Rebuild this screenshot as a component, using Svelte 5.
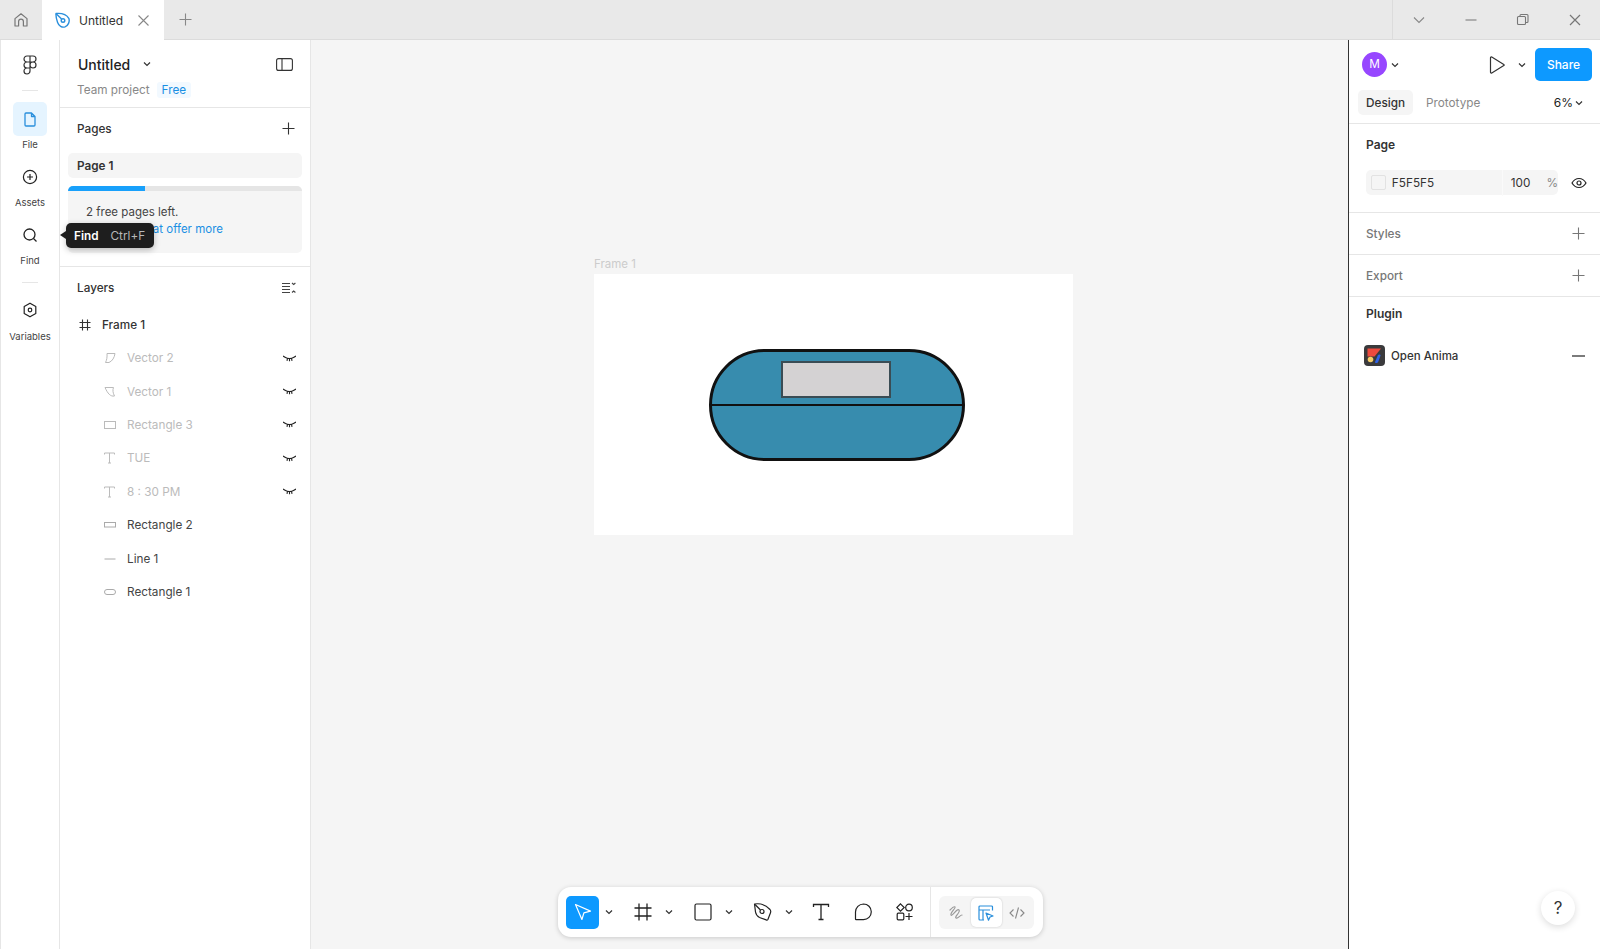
<script>
  const layers = [
    { name: "Vector 2", icon: "vec2", hidden: true },
    { name: "Vector 1", icon: "vec1", hidden: true },
    { name: "Rectangle 3", icon: "rect", hidden: true },
    { name: "TUE", icon: "text", hidden: true },
    { name: "8 : 30 PM", icon: "text", hidden: true },
    { name: "Rectangle 2", icon: "slim", hidden: false },
    { name: "Line 1", icon: "line", hidden: false },
    { name: "Rectangle 1", icon: "pill", hidden: false },
  ];
</script>

{#snippet chevron()}
  <svg class="chev" width="8" height="6" viewBox="0 0 8 6"><path d="M1 1.500l3 3 3-3" fill="none" stroke="#333" stroke-width="1.200"/></svg>
{/snippet}

{#snippet plus(color = "#333")}
  <svg width="13" height="13" viewBox="0 0 13 13"><path d="M6.500 0.500v12M0.500 6.500h12" fill="none" stroke={color} stroke-width="1.100"/></svg>
{/snippet}

<div class="window">
  <header class="tabbar">
    <div class="home">
      <svg width="16" height="16" viewBox="0 0 16 16" fill="none" stroke="#777" stroke-width="1.200"><path d="M2 6.600L8 1.800l6 4.800V14h-3.600V9.600a2.400 2.400 0 0 0-4.800 0V14H2z" stroke-linejoin="round"/></svg>
    </div>
    <div class="tab">
      <svg width="17" height="17" viewBox="0 0 17 17" fill="none" stroke="#2a8fdc" stroke-width="1.400"><path d="M2 1.500c4.800-.4 10.500 1 12.800 4.800 1.200 3.200-.6 7.500-3.800 8.600-3 .9-6.200-.9-7.400-4.300C2.600 8 1.800 4.500 2 1.500z" stroke-linejoin="round"/><circle cx="9" cy="8.500" r="1.800"/><path d="M2.200 1.700l5.400 5.400"/></svg>
      <span class="tab-name">Untitled</span>
      <svg width="13" height="13" viewBox="0 0 13 13"><path d="M1.500 1.500l10 10M11.500 1.500l-10 10" stroke="#888" stroke-width="1.100"/></svg>
    </div>
    <div class="newtab">{@render plus("#888")}</div>
    <div class="winctl">
      <svg width="14" height="14" viewBox="0 0 14 14"><path d="M2 4.500l5 5 5-5" fill="none" stroke="#888" stroke-width="1.100"/></svg>
      <svg width="14" height="14" viewBox="0 0 14 14"><path d="M1.500 7h11" stroke="#888" stroke-width="1.200"/></svg>
      <svg width="14" height="14" viewBox="0 0 14 14" fill="none" stroke="#777" stroke-width="1.100"><rect x="1.500" y="3.500" width="8" height="8" rx="1"/><path d="M4 3.500V2.500a1 1 0 0 1 1-1h6a1 1 0 0 1 1 1v6a1 1 0 0 1-1 1h-1.500"/></svg>
      <svg width="14" height="14" viewBox="0 0 14 14"><path d="M2 2l10 10M12 2L2 12" stroke="#777" stroke-width="1.200"/></svg>
    </div>
  </header>

  <div class="workspace">
    <nav class="rail">
      <div class="rail-logo">
        <svg width="14" height="20" viewBox="0 0 14 20" fill="none" stroke="#333" stroke-width="1.200"><path d="M7 1H4a3 3 0 0 0 0 6h3zM7 1h3a3 3 0 0 1 0 6H7zM7 7H4a3 3 0 0 0 0 6h3zM7 13H4a3 3 0 1 0 3 3zM10 7a3 3 0 1 1 0 6 3 3 0 0 1 0-6z"/></svg>
      </div>
      <div class="rail-sep"></div>
      <div class="rail-item">
        <div class="rail-icon active">
          <svg width="12" height="15" viewBox="0 0 12 15" fill="none" stroke="#2a8fdc" stroke-width="1.300"><path d="M1 2a1 1 0 0 1 1-1h5.500L11 4.500V13a1 1 0 0 1-1 1H2a1 1 0 0 1-1-1z M7.500 1v3.500H11" stroke-linejoin="round"/></svg>
        </div>
        <span>File</span>
      </div>
      <div class="rail-item">
        <div class="rail-icon">
          <svg width="16" height="16" viewBox="0 0 16 16" fill="none" stroke="#222" stroke-width="1.200"><circle cx="8" cy="8" r="6.600"/><path d="M8 5v6M5 8h6"/></svg>
        </div>
        <span>Assets</span>
      </div>
      <div class="rail-item short">
        <div class="rail-icon">
          <svg width="16" height="16" viewBox="0 0 16 16" fill="none" stroke="#222" stroke-width="1.300"><circle cx="7.500" cy="7.500" r="5.500"/><path d="M11.500 11.500L14.500 14.500"/></svg>
        </div>
        <span>Find</span>
      </div>
      <div class="rail-sep second"></div>
      <div class="rail-item vars">
        <div class="rail-icon">
          <svg width="16" height="16" viewBox="0 0 16 16" fill="none" stroke="#222" stroke-width="1.200"><path d="M8 1.200l5.800 3.300v7L8 14.800l-5.800-3.300v-7z" stroke-linejoin="round"/><circle cx="8" cy="8" r="1.800"/></svg>
        </div>
        <span>Variables</span>
      </div>
    </nav>

    <aside class="left">
      <section class="filehead">
        <div class="title-row">
          <strong>Untitled</strong>
          {@render chevron()}
          <svg class="toggle" width="17" height="13" viewBox="0 0 17 13" fill="none" stroke="#333" stroke-width="1.100"><rect x="0.600" y="0.600" width="15.800" height="11.800" rx="2"/><path d="M6 .6v11.800"/></svg>
        </div>
        <div class="sub-row"><span>Team project</span><span class="free">Free</span></div>
      </section>

      <section class="pages">
        <div class="section-head pages-head"><span>Pages</span>{@render plus()}</div>
        <div class="page-item">Page 1</div>
        <div class="upsell">
          <div class="progress"><div class="progress-fill" style="width: 33%"></div></div>
          <div class="upsell-body">
            <p>2 free pages left.</p>
            <p class="link">at offer more</p>
          </div>
        </div>
      </section>

      <section class="layers">
        <div class="section-head layers-head">
          <span>Layers</span>
          <svg width="14" height="12" viewBox="0 0 14 12" fill="none" stroke="#444" stroke-width="1.100"><path d="M0 1.500h8M0 4.500h8M0 7.500h8M0 10.500h8M10 1l1.700 1.500L13.400 1M10 10.500l1.700-1.500 1.700 1.500"/></svg>
        </div>
        <div class="frame-row">
          <svg width="12" height="12" viewBox="0 0 12 12" fill="none" stroke="#333" stroke-width="1.100"><path d="M3.500 0.500v11M8.500 0.500v11M0.500 3.500h11M0.500 8.500h11"/></svg>
          <span>Frame 1</span>
        </div>
        {#each layers as layer}
          <div class="layer" class:hidden={layer.hidden}>
            <span class="layer-icon">
              <svg width="12" height="12" viewBox="0 0 12 12" fill="none" stroke={layer.hidden ? "#bbb" : "#aaa"} stroke-width="1">
                {#if layer.icon === "vec2"}
                  <path d="M3 1.500h8c-.6 4-2.500 7.500-6 9H1.500c1.300-2.500 1.800-5.500 1.500-9z"/>
                {:else if layer.icon === "vec1"}
                  <path d="M1 1.500h8.500c-1 2.500-.6 5.500 1 8.500-4 .8-6.800-2.500-9.500-8.500z"/>
                {:else if layer.icon === "rect"}
                  <rect x="0.500" y="2.500" width="11" height="7"/>
                {:else if layer.icon === "text"}
                  <path d="M0.500 2.500V1h10v1.500M5.500 1v10M4 11h3"/>
                {:else if layer.icon === "slim"}
                  <rect x="0.500" y="3.500" width="11" height="4.500"/>
                {:else if layer.icon === "line"}
                  <path d="M0.500 6h11"/>
                {:else}
                  <rect x="0.500" y="3.500" width="11" height="5" rx="2.500"/>
                {/if}
              </svg>
            </span>
            <span class="layer-name">{layer.name}</span>
            {#if layer.hidden}
              <svg class="eye-off" width="13" height="7" viewBox="0 0 13 7" fill="none" stroke="#222" stroke-width="1.100"><path d="M2 2.200c2.800 1.600 6.200 1.600 9 0M0 1l2.500 1.500M13 1l-2.500 1.500M4.500 3.200L4 5.800M8.500 3.200L9 5.800M6.500 3.500V6.200"/></svg>
            {/if}
          </div>
        {/each}
      </section>

      <div class="tooltip"><b>Find</b><span>Ctrl+F</span></div>
    </aside>

    <main class="canvas">
      <div class="frame-label">Frame 1</div>
      <div class="frame">
        <div class="pill">
          <div class="divider"></div>
          <div class="screen"></div>
        </div>
      </div>

      <div class="toolbar">
        <div class="tools">
          <div class="tool move">
            <svg width="20" height="20" viewBox="0 0 20 20" fill="none" stroke="#fff" stroke-width="1.200"><path d="M2.500 2.500l15 6.600-6.600 1.800-2 6.600z" stroke-linejoin="round"/></svg>
          </div>
          <div class="caret">{@render chevron()}</div>
          <div class="tool">
            <svg width="18" height="18" viewBox="0 0 18 18" fill="none" stroke="#222" stroke-width="1.300"><path d="M5 0.500v17M13 0.500v17M0.500 5h17M0.500 13h17"/></svg>
          </div>
          <div class="caret">{@render chevron()}</div>
          <div class="tool">
            <svg width="18" height="18" viewBox="0 0 18 18" fill="none" stroke="#222" stroke-width="1.200"><rect x="1" y="1" width="16" height="16" rx="1.500"/></svg>
          </div>
          <div class="caret">{@render chevron()}</div>
          <div class="tool">
            <svg width="20" height="20" viewBox="0 0 20 20" fill="none" stroke="#222" stroke-width="1.200"><path d="M1.500 2c5-.8 11 .6 15.500 5.500 1 1.300 1 2.200.4 3.500l-2.500 6.500c-.5.700-1 .8-1.700.4L6.500 15.500c-2.500-1.200-3.500-3-4-5.500z" stroke-linejoin="round"/><circle cx="9" cy="9.500" r="2"/><path d="M2 2.500l5.500 5.500"/></svg>
          </div>
          <div class="caret last">{@render chevron()}</div>
          <div class="tool">
            <svg width="18" height="18" viewBox="0 0 18 18" fill="none" stroke="#222" stroke-width="1.300"><path d="M1.500 4V1.500h15V4M9 1.500v15M6.500 16.500h5"/></svg>
          </div>
          <div class="tool">
            <svg width="20" height="20" viewBox="0 0 20 20" fill="none" stroke="#222" stroke-width="1.200"><path d="M10.500 2a7.800 7.800 0 0 1 0 15.600H3.200a.7.700 0 0 1-.7-.7V10a8 8 0 0 1 8-8z"/></svg>
          </div>
          <div class="tool">
            <svg width="18" height="18" viewBox="0 0 18 18" fill="none" stroke="#222" stroke-width="1.200"><path d="M4.500 0.800L8.200 4.500 4.500 8.200 0.800 4.500z"/><circle cx="13" cy="4.500" r="3.300"/><rect x="1.200" y="10.200" width="6.600" height="6.600" rx="1"/><path d="M13 10v7M9.500 13.500h7"/></svg>
          </div>
        </div>
        <div class="modes">
          <div class="mode">
            <svg width="16" height="16" viewBox="0 0 16 16" fill="none" stroke="#999" stroke-width="1.200"><path d="M2 5C4 3 6 1 7 2S2 8 3 10 9 3 11 5 6 12 8 13s4-3 6-3" stroke-linecap="round"/></svg>
          </div>
          <div class="mode selected">
            <svg width="16" height="16" viewBox="0 0 16 16" fill="none" stroke="#2a8fdc" stroke-width="1.200"><path d="M14.500 5.500V2a1 1 0 0 0-1-1H2a1 1 0 0 0-1 1v12a1 1 0 0 0 1 1h4M1 5h11M5 5v10"/><path d="M8 8l7 3-3 1-1.500 3.200z" stroke-linejoin="round"/></svg>
          </div>
          <div class="mode">
            <svg width="16" height="12" viewBox="0 0 16 12" fill="none" stroke="#888" stroke-width="1.100"><path d="M4.500 2.500L1 6l3.500 3.500M11.500 2.500L15 6l-3.500 3.500M9.500 .5L6.500 11.500"/></svg>
          </div>
        </div>
      </div>
    </main>

    <aside class="right">
      <section class="right-top">
        <div class="user-row">
          <div class="avatar">M</div>
          {@render chevron()}
          <div class="spacer"></div>
          <svg class="play" width="16" height="18" viewBox="0 0 16 18" fill="none" stroke="#333" stroke-width="1.200"><path d="M1.500 1.800c0-.7.700-1 1.300-.7l12 7.300c.5.300.5.900 0 1.200l-12 7.300c-.6.300-1.300 0-1.300-.7z"/></svg>
          {@render chevron()}
          <button type="button" class="share">Share</button>
        </div>
        <div class="tabs-row">
          <span class="design">Design</span>
          <span class="proto">Prototype</span>
          <span class="zoomval">6%</span>
          {@render chevron()}
        </div>
      </section>

      <section class="page-sec">
        <h4>Page</h4>
        <div class="fill-row">
          <div class="fill-input">
            <span class="swatch"></span>
            <span class="hex">F5F5F5</span>
            <span class="opacity">100</span>
            <span class="pct">%</span>
          </div>
          <svg width="16" height="12" viewBox="0 0 16 12" fill="none" stroke="#222" stroke-width="1.200"><path d="M1 6c3.500-6 10.500-6 14 0-3.500 6-10.500 6-14 0z"/><circle cx="8" cy="6" r="2"/></svg>
        </div>
      </section>

      <section class="row-sec"><span>Styles</span>{@render plus("#777")}</section>
      <section class="row-sec"><span>Export</span>{@render plus("#777")}</section>

      <section class="plugin-sec">
        <h4>Plugin</h4>
        <div class="plugin-row">
          <svg width="21" height="21" viewBox="0 0 21 21"><rect width="21" height="21" rx="4" fill="#3a3a3c"/><path d="M3.500 3.500h13.500l-6.500 8H3.500z" fill="#ee4a3e"/><circle cx="6.500" cy="14.500" r="2.800" fill="#f7ce68"/><path d="M11 17l3-7c.6-1 3-.6 2.500.8l-2.500 6.500c-.6 1-3.300.8-3-.3z" fill="#2f62e8"/></svg>
          <span>Open Anima</span>
          <svg class="minus" width="13" height="2" viewBox="0 0 13 2"><path d="M0 1h13" stroke="#222" stroke-width="1.200"/></svg>
        </div>
      </section>
    </aside>
  </div>

  <div class="help">?</div>
</div>

<style>
  :global(body) {
    font-family: Inter, "Noto Sans", sans-serif;
    color: #222;
    overflow: hidden;
  }
  p, h4 { margin: 0; }

  .window {
    position: relative;
    display: flex;
    flex-direction: column;
    width: 1600px;
    height: 949px;
    font-size: 11.750px;
    background: #fff;
  }

  /* tab strip */
  .tabbar {
    display: flex;
    align-items: stretch;
    flex: 0 0 40px;
    background: #e9e9e9;
    border-bottom: 1px solid #dcdcdc;
    box-sizing: border-box;
  }
  .home {
    width: 42px;
    display: flex;
    align-items: center;
    justify-content: center;
  }
  .tab {
    width: 122px;
    margin-bottom: -1px;
    background: #fff;
    display: flex;
    align-items: center;
    padding-left: 12px;
    box-sizing: border-box;
  }
  .tab-name {
    margin: 0 13px 0 8px;
    width: 45px;
    font-size: 12px;
    color: #333;
  }
  .newtab {
    width: 42px;
    display: flex;
    align-items: center;
    justify-content: center;
  }
  .winctl {
    margin-left: auto;
    width: 208px;
    box-sizing: border-box;
    border-left: 1px solid #dcdcdc;
    display: grid;
    grid-template-columns: repeat(4, 52px);
    justify-items: center;
    align-items: center;
  }

  .workspace {
    flex: 1;
    display: flex;
    min-height: 0;
  }

  /* left rail */
  .rail {
    flex: 0 0 60px;
    box-sizing: border-box;
    border-left: 1px solid #e6e6e6;
    border-right: 1px solid #e6e6e6;
    display: flex;
    flex-direction: column;
    align-items: center;
  }
  .rail-logo { margin-top: 15px; height: 20px; }
  .rail-sep {
    width: 16px;
    height: 1px;
    background: #e6e6e6;
    margin: 15px 0 11px;
  }
  .rail-item {
    display: flex;
    flex-direction: column;
    align-items: center;
    font-size: 9.500px;
    color: #444;
    height: 58px;
  }
  .rail-item.short { height: 52px; }
  .rail-sep.second { margin: 12px 0 10px; }
  .rail-icon {
    width: 34px;
    height: 34px;
    border-radius: 5px;
    display: flex;
    align-items: center;
    justify-content: center;
    margin-bottom: 3px;
  }
  .rail-item.vars .rail-icon { margin-bottom: 4px; }
  .rail-icon.active { background: #e5f4ff; }

  /* left panel */
  .left {
    position: relative;
    flex: 0 0 251px;
    box-sizing: border-box;
    border-right: 1px solid #e6e6e6;
    display: flex;
    flex-direction: column;
  }
  .filehead {
    height: 68px;
    box-sizing: border-box;
    padding: 14px 18px 0;
    border-bottom: 1px solid #e6e6e6;
  }
  .title-row {
    display: flex;
    align-items: center;
    height: 20px;
  }
  .title-row strong {
    font-size: 14px;
    font-weight: 500;
    margin-right: 13px;
  }
  .toggle { margin-left: auto; margin-right: -1px; }
  .sub-row {
    display: flex;
    align-items: center;
    margin: 8px 0 0 -1px;
    font-size: 11.750px;
    color: #888;
  }
  .free {
    margin-left: 7px;
    padding: 1px 5px;
    border-radius: 3px;
    background: #f2f9ff;
    color: #1a8fe3;
  }
  .pages {
    height: 159px;
    box-sizing: border-box;
    padding: 0 8px;
    border-bottom: 1px solid #e6e6e6;
  }
  .section-head {
    display: flex;
    align-items: center;
    justify-content: space-between;
    font-weight: 500;
    color: #333;
  }
  .pages-head {
    height: 45px;
    box-sizing: border-box;
    padding: 0 7px 4px 9px;
  }
  .page-item {
    height: 25px;
    line-height: 26px;
    padding-left: 9px;
    background: #f5f5f5;
    border-radius: 5px;
    font-weight: 600;
    color: #333;
  }
  .upsell {
    margin-top: 8px;
    height: 67px;
    background: #f5f5f5;
    border-radius: 5px;
    overflow: hidden;
  }
  .progress {
    height: 5px;
    background: #e5e5e5;
  }
  .progress-fill {
    height: 100%;
    background: #18a0fb;
  }
  .upsell-body {
    padding: 13px 18px;
    font-size: 11.500px;
    line-height: 17px;
    color: #444;
  }
  .link {
    width: 137px;
    text-align: right;
    color: #1a8fe3;
  }
  .layers {
    flex: 1;
  }
  .layers-head {
    padding: 0 14px 0 17px;
    height: 41px;
  }
  .frame-row {
    display: flex;
    align-items: center;
    height: 33px;
    padding-left: 19px;
    color: #333;
    margin-bottom: 0.500px;
  }
  .frame-row span { margin-left: 11px; font-weight: 500; }
  .layer {
    display: flex;
    align-items: center;
    height: 33.400px;
    padding: 0 14px 0 44px;
    color: #444;
  }
  .layer.hidden { color: #bbb; }
  .layer-icon {
    width: 23px;
    display: flex;
  }
  .eye-off { margin-left: auto; }
  .tooltip {
    position: absolute;
    left: 6px;
    top: 183px;
    width: 88px;
    height: 25px;
    box-sizing: border-box;
    padding: 0 8px;
    display: flex;
    align-items: center;
    gap: 12px;
    background: #1e1e1e;
    border-radius: 5px;
    box-shadow: 0 2px 6px rgba(0, 0, 0, 0.25);
    color: #b8b8b8;
  }
  .tooltip::before {
    content: "";
    position: absolute;
    left: -6px;
    top: 8px;
    border-style: solid;
    border-width: 4.500px 6px 4.500px 0;
    border-color: transparent #1e1e1e transparent transparent;
  }
  .tooltip b {
    color: #fff;
    font-weight: 600;
  }

  /* canvas */
  .canvas {
    position: relative;
    flex: 1;
    background: #f5f5f5;
  }
  .frame-label {
    position: absolute;
    left: 283px;
    top: 217px;
    color: #ccc;
    font-size: 11.500px;
  }
  .frame {
    position: absolute;
    left: 283px;
    top: 234px;
    width: 479px;
    height: 261px;
    background: #fff;
  }
  .pill {
    position: absolute;
    left: 115px;
    top: 75px;
    width: 256px;
    height: 112px;
    box-sizing: border-box;
    border: 3px solid #111;
    border-radius: 56px;
    background: #378cae;
  }
  .divider {
    position: absolute;
    left: 0;
    right: 0;
    top: 52px;
    height: 2px;
    background: #111;
  }
  .screen {
    position: absolute;
    left: 69px;
    top: 9px;
    width: 110px;
    height: 37px;
    box-sizing: border-box;
    border: 2px solid #3a4c54;
    background: #d4d2d3;
  }

  .toolbar {
    position: absolute;
    left: 247px;
    top: 847px;
    width: 485px;
    height: 50px;
    box-sizing: border-box;
    padding: 9px 9px 9px 8px;
    display: flex;
    justify-content: space-between;
    background: #fff;
    border-radius: 13px;
    box-shadow: 0 1px 5px rgba(0, 0, 0, 0.18);
  }
  .tools {
    display: flex;
    align-items: center;
    width: 365px;
    border-right: 1px solid #e6e6e6;
    margin: -9px 0;
    box-sizing: border-box;
  }
  .tool {
    width: 33px;
    height: 33px;
    border-radius: 5px;
    display: flex;
    align-items: center;
    justify-content: center;
  }
  .tool + .tool { margin-left: 9px; }
  .tool.move { background: #0d99ff; }
  .caret {
    width: 27px;
    box-sizing: border-box;
    padding-right: 8px;
    display: flex;
    justify-content: center;
  }
  .caret.last {
    width: 25px;
    padding-right: 6px;
  }
  .modes {
    display: flex;
    align-items: center;
    width: 95px;
    height: 33px;
    padding: 2px;
    box-sizing: border-box;
    border-radius: 6px;
    background: #f5f5f5;
  }
  .mode {
    flex: 1;
    height: 29px;
    border-radius: 5px;
    display: flex;
    align-items: center;
    justify-content: center;
  }
  .mode.selected {
    background: #fff;
    box-shadow: 0 0 2px rgba(0, 0, 0, 0.2);
  }
  .help {
    position: absolute;
    right: 25px;
    bottom: 24px;
    width: 34px;
    height: 34px;
    border-radius: 50%;
    background: #fff;
    box-shadow: 0 2px 7px rgba(0, 0, 0, 0.14);
    text-align: center;
    line-height: 34px;
    font-size: 17px;
    color: #333;
  }

  /* right panel */
  .right {
    flex: 0 0 252px;
    box-sizing: border-box;
    border-left: 1px solid #333;
  }
  .right-top {
    height: 84px;
    box-sizing: border-box;
    padding: 8px 8px 0 13px;
    border-bottom: 1px solid #e6e6e6;
  }
  .user-row {
    display: flex;
    align-items: center;
    height: 33px;
  }
  .avatar {
    width: 25px;
    height: 25px;
    border-radius: 50%;
    background: #9747ff;
    color: #fff;
    text-align: center;
    line-height: 25px;
    margin-right: 4px;
  }
  .spacer { flex: 1; }
  .play { margin-right: 13px; }
  .share {
    margin-left: 9px;
    width: 57px;
    height: 33px;
    border: none;
    border-radius: 5px;
    background: #0d99ff;
    color: #fff;
    font: 500 12px Inter, sans-serif;
  }
  .tabs-row {
    display: flex;
    align-items: center;
    margin-top: 9px;
    height: 25px;
    padding-left: 5px;
    padding-right: 9px;
    font-weight: 500;
  }
  .design {
    width: 38px;
    padding: 0 9px 0 8px;
    margin-left: -9px;
    line-height: 26px;
    height: 25px;
    background: #f5f5f5;
    border-radius: 5px;
    color: #333;
  }
  .proto {
    margin-left: 13px;
    color: #888;
    font-weight: 400;
  }
  .zoomval {
    margin-left: auto;
    margin-right: 2px;
    font-size: 12px;
    font-weight: 400;
  }
  .page-sec {
    height: 89px;
    box-sizing: border-box;
    padding: 13px 0 0 17px;
    border-bottom: 1px solid #e6e6e6;
  }
  h4 {
    font-size: 12px;
    font-weight: 600;
    color: #333;
    line-height: 16px;
  }
  .fill-row {
    display: flex;
    align-items: center;
    margin-top: 17px;
  }
  .fill-input {
    width: 192px;
    height: 25px;
    background: #f5f5f5;
    border-radius: 5px;
    display: flex;
    align-items: center;
    box-sizing: border-box;
    padding-left: 5px;
    color: #333;
  }
  .swatch {
    width: 13px;
    height: 13px;
    border: 1px solid #e2e2e2;
    border-radius: 2px;
    background: #f5f5f5;
  }
  .hex { margin-left: 6px; width: 111px; }
  .opacity {
    border-left: 1px solid #fafafa;
    padding-left: 8px;
    line-height: 26px;
    width: 27px;
  }
  .pct { margin-left: 9px; color: #888; }
  .fill-row svg { margin: 0 0 0 13px; }
  .row-sec {
    height: 42px;
    box-sizing: border-box;
    padding: 0 15px 0 17px;
    display: flex;
    align-items: center;
    justify-content: space-between;
    border-bottom: 1px solid #e6e6e6;
    color: #777;
    font-weight: 500;
  }
  .plugin-sec { padding: 9px 0 0 17px; }
  .plugin-row {
    display: flex;
    align-items: center;
    margin: 23px 0 0 -2px;
    color: #333;
    font-size: 11.500px;
  }
  .plugin-row span { margin-left: 6px; font-weight: 500; }
  .minus { margin-left: auto; margin-right: 15px; }
</style>
